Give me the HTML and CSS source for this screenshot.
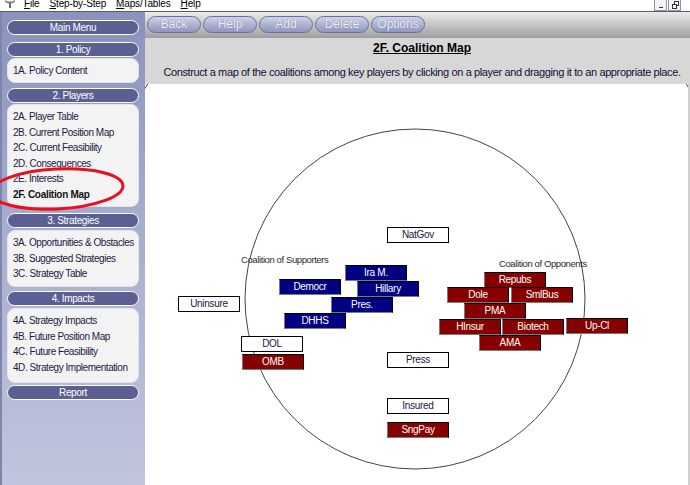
FILE: index.html
```html
<!DOCTYPE html>
<html>
<head>
<meta charset="utf-8">
<link rel="stylesheet" href="styles.css">
</head>
<body>
<div class="app">
  <div class="menubar">
    <div class="appicon"><svg width="12" height="8" viewBox="0 0 12 8"><path d="M1 0 Q6 3 11 0 L11 2 Q6 5 1 2Z" fill="#8a8a8a"/><rect x="5" y="2" width="2" height="6" fill="#6a6a6a"/></svg></div>
    <div class="menus">
      <span><u>F</u>ile</span>
      <span><u>S</u>tep-by-Step</span>
      <span><u>M</u>aps/Tables</span>
      <span><u>H</u>elp</span>
    </div>
    <div class="winbtns">
      <div class="wb"><svg width="10" height="9" viewBox="0 0 10 9"><rect x="3" y="6" width="4" height="1" fill="#333"/></svg></div>
      <div class="wb"><svg width="10" height="9" viewBox="0 0 10 9"><rect x="4.5" y="0.5" width="4" height="4" fill="none" stroke="#333"/><rect x="2.5" y="3.5" width="4" height="4" fill="#fff" stroke="#333"/></svg></div>
    </div>
  </div>
  <div class="body">
    <aside class="sidebar">
      <div class="pill first">Main Menu</div>
      <div class="pill">1. Policy</div>
      <div class="box policy">
        <div class="item">1A. Policy Content</div>
      </div>
      <div class="pill">2. Players</div>
      <div class="box players">
        <div class="item">2A. Player Table</div>
        <div class="item">2B. Current Position Map</div>
        <div class="item">2C. Current Feasibility</div>
        <div class="item">2D. Consequences</div>
        <div class="item">2E. Interests</div>
        <div class="item active">2F. Coalition Map</div>
      </div>
      <div class="pill wide">3. Strategies</div>
      <div class="box strategies">
        <div class="item">3A. Opportunities &amp; Obstacles</div>
        <div class="item">3B. Suggested Strategies</div>
        <div class="item">3C. Strategy Table</div>
      </div>
      <div class="pill impacts-pill">4. Impacts</div>
      <div class="box impacts">
        <div class="item">4A. Strategy Impacts</div>
        <div class="item">4B. Future Position Map</div>
        <div class="item">4C. Future Feasibility</div>
        <div class="item">4D. Strategy Implementation</div>
      </div>
      <div class="pill report">Report</div>
      <svg class="annot" width="145" height="60" viewBox="0 0 145 60"><ellipse cx="57" cy="29" rx="66" ry="20" transform="rotate(-3 57 29)" fill="none" stroke="#e8101c" stroke-width="3"/></svg>
    </aside>
    <main class="main">
      <div class="toolbar">
        <button class="tb">Back</button>
        <button class="tb">Help</button>
        <button class="tb">Add</button>
        <button class="tb">Delete</button>
        <button class="tb">Options</button>
      </div>
      <div class="header">
        <h1 class="title">2F. Coalition Map</h1>
        <p class="instr">Construct a map of the coalitions among key players by clicking on a player and dragging it to an appropriate place.</p>
      </div>
      <div class="canvas">
        <svg class="rings" width="545" height="401" viewBox="0 0 545 401">
          <ellipse cx="272" cy="216" rx="330" ry="374" fill="none" stroke="#3a4848" stroke-width="1"/>
          <circle cx="270" cy="215" r="170" fill="none" stroke="#3a4848" stroke-width="1"/>
        </svg>
        <div class="label" style="left:96px;top:170px">Coalition of Supporters</div>
        <div class="label" style="left:354px;top:174px">Coalition of Opponents</div>

        <div class="node white" style="left:242px;top:143px">NatGov</div>
        <div class="node blue" style="left:200px;top:181px">Ira M.</div>
        <div class="node blue" style="left:134px;top:195px">Democr</div>
        <div class="node blue" style="left:212px;top:197px">Hillary</div>
        <div class="node blue" style="left:186px;top:213px">Pres.</div>
        <div class="node blue" style="left:139px;top:229px">DHHS</div>
        <div class="node white" style="left:33px;top:212px">Uninsure</div>
        <div class="node white" style="left:96px;top:252px">DOL</div>
        <div class="node red" style="left:97px;top:270px">OMB</div>
        <div class="node white" style="left:242px;top:268px">Press</div>
        <div class="node white" style="left:242px;top:314px">Insured</div>
        <div class="node red" style="left:242px;top:338px">SngPay</div>

        <div class="node red" style="left:339px;top:188px">Repubs</div>
        <div class="node red" style="left:302px;top:203px">Dole</div>
        <div class="node red" style="left:366px;top:203px">SmlBus</div>
        <div class="node red" style="left:319px;top:219px">PMA</div>
        <div class="node red" style="left:294px;top:235px">HInsur</div>
        <div class="node red" style="left:357px;top:235px">Biotech</div>
        <div class="node red" style="left:421px;top:234px">Up-Cl</div>
        <div class="node red" style="left:334px;top:251px">AMA</div>
      </div>
    </main>
  </div>
</div>
</body>
</html>
```
FILE: styles.css
```css
* { box-sizing: border-box; }
html, body { margin: 0; padding: 0; }
body {
  width: 690px;
  height: 485px;
  overflow: hidden;
  font-family: "Liberation Sans", Arial, sans-serif;
  background: #fff;
}
.app {
  display: flex;
  flex-direction: column;
  height: 485px;
}
.menubar {
  height: 12px;
  flex: none;
  display: flex;
  align-items: flex-start;
  background: #fff;
  border-bottom: 1px solid #5e5e5e;
  overflow: hidden;
  font-size: 10px;
  color: #000;
}
.appicon {
  width: 24px;
  padding-left: 4px;
  margin-top: -1px;
}
.menus {
  display: flex;
  gap: 10px;
  line-height: 11px;
  margin-top: -2px;
  letter-spacing: -0.15px;
}
.menus span { white-space: nowrap; }
.winbtns {
  margin-left: auto;
  display: flex;
  gap: 1px;
  margin-right: 9px;
}
.wb {
  width: 13px;
  height: 11px;
  border: 1px solid #8a94b0;
  border-top: none;
  background: #f4f4f4;
  display: flex;
  align-items: center;
  justify-content: center;
}
.body {
  flex: 1;
  display: flex;
  min-height: 0;
}
.sidebar {
  position: relative;
  width: 145px;
  flex: none;
  padding: 8px 6px 0 5px;
  background: linear-gradient(#8a92bd, #a7adcd 45%, #c0c4dc);
  border-left: 2px solid #7c85aa;
  display: flex;
  flex-direction: column;
}
.pill {
  height: 15px;
  flex: none;
  border: 1px solid #fff;
  border-radius: 8px;
  background: #5b6093;
  color: #fff;
  font-size: 10px;
  line-height: 13px;
  text-align: center;
  margin-top: 5px;
  letter-spacing: -0.35px;
}
.pill.first { margin-top: 0; margin-bottom: 2px; }
.pill.wide { margin-top: 6px; }
.pill.impacts-pill { margin-top: 4px; }
.pill.report { margin-top: 2px; }
.box {
  flex: none;
  margin-top: 1px;
  background: #f3f3f3;
  border: 1px solid #e4e4ec;
  border-radius: 8px;
  padding-left: 5px;
}
.box.policy { padding-top: 4px; padding-bottom: 3.5px; }
.box.players { padding-top: 4px; padding-bottom: 4px; }
.box.strategies { margin-top: 2px; padding-top: 4px; padding-bottom: 4.5px; }
.box.impacts { margin-top: 2px; padding-top: 4px; padding-bottom: 7px; }
.item {
  font-size: 10px;
  line-height: 15.5px;
  color: #1c1c44;
  white-space: nowrap;
  letter-spacing: -0.45px;
}
.item.active { font-weight: bold; color: #111; letter-spacing: -0.3px; }
.annot {
  position: absolute;
  left: -2px;
  top: 148px;
}
.main {
  flex: 1;
  display: flex;
  flex-direction: column;
  min-width: 0;
}
.toolbar {
  height: 26px;
  flex: none;
  display: flex;
  gap: 2px;
  padding: 4px 0 0 2px;
  background: linear-gradient(#ececec, #c4c4c4 50%, #9e9e9e);
}
.tb {
  width: 54px;
  height: 17px;
  padding: 0;
  border: 1px solid #6a7198;
  border-radius: 9px;
  background: linear-gradient(#d0d3e6, #aab0d0 55%, #9097c0);
  color: #eef0fa;
  font-family: "Liberation Sans", Arial, sans-serif;
  font-size: 12px;
  line-height: 15px;
  text-shadow: 0 0 1px #6a7098;
}
.header {
  height: 46px;
  flex: none;
  background: #d7d7d7;
  padding: 3px 0 0 9px;
  text-align: center;
}
.title {
  margin: 0;
  font-size: 12px;
  font-weight: bold;
  text-decoration: underline;
  line-height: 15px;
  color: #000;
}
.instr {
  margin: 9px 0 0;
  font-size: 11px;
  line-height: 14px;
  color: #101030;
  white-space: nowrap;
  letter-spacing: -0.38px;
}
.canvas {
  position: relative;
  flex: 1;
  background: #fff;
  border-right: 2px solid #d0d0d0;
  overflow: hidden;
}
.rings {
  position: absolute;
  left: 0;
  top: 0;
}
.label {
  position: absolute;
  font-size: 9.5px;
  line-height: 12px;
  color: #2a2a2a;
  white-space: nowrap;
  letter-spacing: -0.4px;
}
.node {
  position: absolute;
  width: 62px;
  height: 16px;
  font-size: 10px;
  line-height: 14px;
  text-align: center;
  border: 1px solid #000;
  white-space: nowrap;
  letter-spacing: -0.3px;
}
.node.white {
  background: #fff;
  color: #202040;
}
.node.blue {
  background: #000080;
  color: #fff;
  border-color: #000 #000 #7a7a7a #7a7a7a;
}
.node.red {
  background: #870000;
  color: #fff;
  border-color: #000 #000 #7a7a7a #7a7a7a;
}
```
